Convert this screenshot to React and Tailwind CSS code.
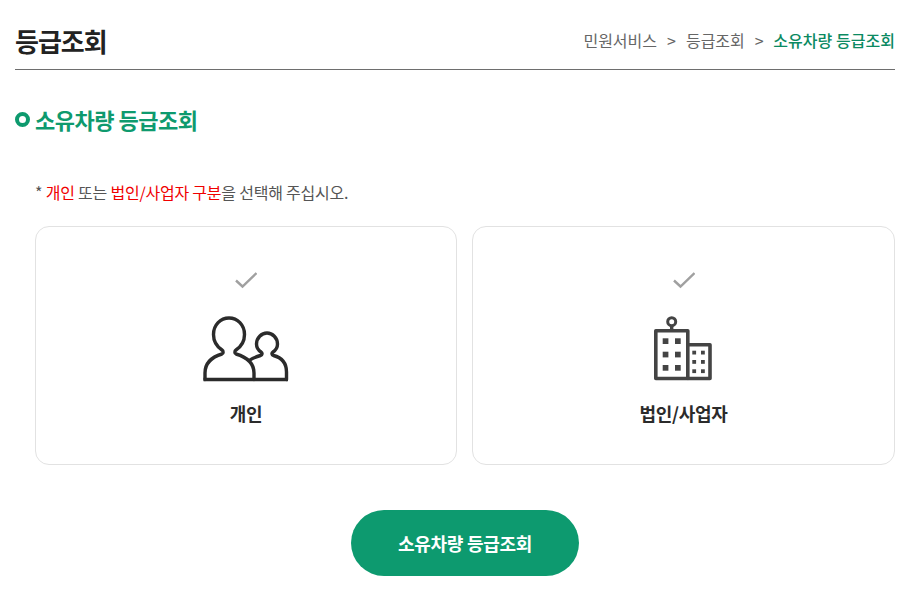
// App.jsx
import * as React from "react";

function Check() {
  return (
    <svg width="22" height="18" viewBox="0 0 22 18" fill="none" className="block">
      <path d="M1 9.5 L7.5 15.5 L21.5 2" stroke="#a0a0a0" strokeWidth="2.4" />
    </svg>
  );
}

function PersonIcon() {
  return (
    <svg width="86" height="66" viewBox="0 0 86 66" fill="none" className="block">
      <g stroke="#2b2b2b" strokeWidth="3.4" strokeLinejoin="round" strokeLinecap="round">
        <path d="M2 63.5 V57 C2 47 9 41 19 38 C20.5 37.5 20.5 35 19 34 C13 30 10.5 25 10.5 18.5 C10.5 9 17.5 2 26 2 C34.5 2 41.5 9 41.5 18.5 C41.5 25 39 30 33 34 C31.5 35 31.5 37.5 33 38 C43 41 51 47 51 57 V63.5" />
        <path d="M47 44 C49.5 42 54 40.5 57.5 39.5 C59.5 39 59.5 37 58 36 C55 34 53.5 31.5 53.5 28 C53.5 22 58.5 17 64 17 C69.5 17 74.5 22 74.5 28 C74.5 31.5 73 34 70 36 C68.5 37 68.5 39 70.5 39.5 C78 41.5 83.5 47 83.5 56 V63.5" />
      </g>
      <path d="M0.5 63.5 H85" stroke="#2b2b2b" strokeWidth="3.6" />
    </svg>
  );
}

function BuildingIcon() {
  const big = [[8.7, 22.3], [21, 22.3], [8.7, 35.7], [21, 35.7], [8.7, 49], [21, 49]];
  const small = [[38.3, 34.7], [47, 34.7], [38.3, 44], [47, 44], [38.3, 53.3], [47, 53.3]];
  return (
    <svg width="59" height="66" viewBox="0 0 59 66" fill="none" className="block">
      <circle cx="17.7" cy="5.7" r="4" stroke="#444" strokeWidth="3" />
      <path d="M17.7 10 V15" stroke="#444" strokeWidth="3.4" />
      <path d="M1.8 14.8 H33.8 V62.5 H1.8 Z" stroke="#444" strokeWidth="3.6" strokeLinejoin="round" />
      <path d="M33.8 28.8 H56 V62.5 H33.8" stroke="#444" strokeWidth="3.6" strokeLinejoin="round" />
      {big.map(([x, y]) => <rect key={`${x}-${y}`} x={x} y={y} width="5.7" height="5.7" fill="#444" />)}
      {small.map(([x, y]) => <rect key={`${x}-${y}`} x={x} y={y} width="3.8" height="3.8" fill="#444" />)}
    </svg>
  );
}

function TypeCard({ icon, label, className }) {
  return (
    <button className={`${className} h-[239px] border border-[#e2e2e2] rounded-[14px] bg-white flex flex-col items-center pt-[44px]`}>
      <Check />
      <div className="mt-[27px] h-[66px] flex items-end">{icon}</div>
      <span className="mt-[18px] text-[18px] leading-[26px] font-bold tracking-[-0.3px] text-[#2b2b2b]">{label}</span>
    </button>
  );
}

export default function App() {
  return (
    <div className="bg-white h-[610px] w-[919px] overflow-hidden px-[15px] pr-[24px] font-['Noto_Sans_CJK_KR',sans-serif] text-[#555]">
      {/* 상단 타이틀 */}
      <header className="h-[70px] border-b border-[#6e6e6e] flex items-center justify-between pt-[11px]">
        <h1 className="text-[26px] font-bold tracking-[-1px] text-[#222]">등급조회</h1>
        <nav className="flex items-center text-[16px] text-[#666] mb-[1px]">
          <span>민원서비스</span>
          <span className="mx-[10px]">&gt;</span>
          <span>등급조회</span>
          <span className="ml-[10px] mr-[9.5px]">&gt;</span>
          <span className="font-medium text-[#0b8a62] tracking-[0.05px]">소유차량 등급조회</span>
        </nav>
      </header>

      <h2 className="mt-[33px] flex items-center gap-[5px] text-[22px] leading-[32px] font-bold tracking-[-0.5px] text-[#0e9a6e]">
        <span className="mt-[1px] w-[15px] h-[15px] rounded-full border-[4.5px] border-[#0e9a6e]" />
        소유차량 등급조회
      </h2>

      <div className="pl-[20px]">
        <p className="mt-[45px] text-[16px] leading-[24px] tracking-[-0.22px]">
          * <span className="text-[#f00000]">개인</span> 또는 <span className="text-[#f00000]">법인/사업자 구분</span>을 선택해 주십시오.
        </p>

        <div className="mt-[22px] flex gap-[15px]">
          <TypeCard className="w-[422px]" icon={<PersonIcon />} label="개인" />
          <TypeCard className="w-[423px]" icon={<BuildingIcon />} label="법인/사업자" />
        </div>

        <div className="mt-[45px] flex justify-center">
          <button className="w-[228px] h-[66px] rounded-[33px] bg-[#0d9a6f] text-white text-[18px] font-bold tracking-[-0.3px]">
            소유차량 등급조회
          </button>
        </div>
      </div>
    </div>
  );
}
